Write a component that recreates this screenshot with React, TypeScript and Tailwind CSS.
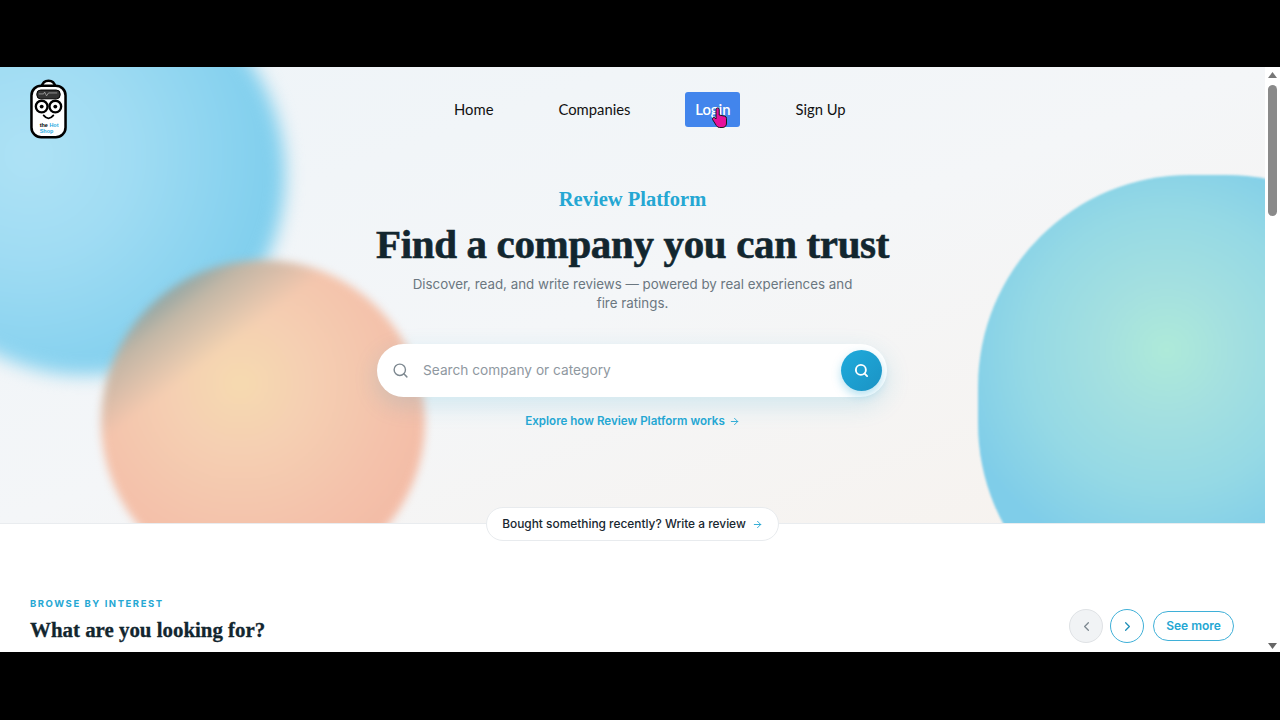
import React from 'react'
import { ArrowRight, ChevronLeft, ChevronRight, Search } from 'lucide-react'

const serif = "font-['Liberation_Serif',serif]"
const sans = "font-['Inter',sans-serif]"

function Logo() {
  return (
    <svg width="37" height="61" viewBox="0 0 38 62" className="shrink-0">
      <path d="M12 8 Q13 1.5 19 1.5 Q25 1.5 26 8" fill="#fff" stroke="#000" strokeWidth="2.5" />
      <rect x="1.5" y="6.5" width="35" height="53" rx="10" fill="#fff" stroke="#000" strokeWidth="2.6" />
      <rect x="7" y="11" width="24" height="9" rx="4" fill="#333" stroke="#000" strokeWidth="1" />
      <path d="M9 15 h5 l1 -2 l2 4 l2 -3 h9" fill="none" stroke="#bbb" strokeWidth="0.7" />
      <circle cx="12" cy="28" r="6" fill="#fff" stroke="#000" strokeWidth="2.4" />
      <circle cx="26" cy="28" r="6" fill="#fff" stroke="#000" strokeWidth="2.4" />
      <circle cx="12" cy="28" r="2" fill="#000" />
      <circle cx="26" cy="28" r="2" fill="#000" />
      <path d="M14 37 Q19 43 24 37" fill="none" stroke="#000" strokeWidth="1.8" strokeLinecap="round" />
      <text x="10" y="49" fontSize="5.6" fontWeight="700" fontFamily="Liberation Sans, sans-serif" fill="#000">the <tspan fill="#29abe2">Hot</tspan></text>
      <text x="10" y="55" fontSize="5.6" fontWeight="700" fontFamily="Liberation Sans, sans-serif" fill="#29abe2">Shop</text>
    </svg>
  )
}

function Cursor() {
  return (
    <svg width="18" height="22" viewBox="0 0 18 22" className="absolute left-[26px] top-[15px]">
      <path
        d="M5 2.5 a1.6 1.6 0 0 1 3.2 0 V8 l5.5 1.2 a2.2 2.2 0 0 1 1.8 2.2 V16 q0 4.5 -4.5 4.5 H8.5 q-2 0 -3.2 -2 L1.6 12.6 a1.5 1.5 0 0 1 2.4 -1.7 L5 12 Z"
        fill="#e6109a"
        stroke="#1a1a1a"
        strokeWidth="1"
      />
    </svg>
  )
}

function Blobs() {
  return (
    <div className="absolute inset-0 overflow-hidden">
      <div className="absolute left-[-115px] top-[-92px] h-[400px] w-[400px] rounded-full bg-[radial-gradient(circle_at_36%_45%,#aee2f5_0%,#a0dcf3_30%,#88d2ef_62%,#78cbeb_85%,#7dcdec_100%)] blur-[9px]" />
      <div className="absolute left-[101px] top-[193px] h-[324px] w-[324px] rounded-full bg-[linear-gradient(143deg,#98a8a4_15%,rgba(160,170,160,0.6)_20%,rgba(243,184,163,0)_32%),radial-gradient(circle_at_43%_38%,#f6dab0_0%,#f5cfb2_25%,#f4c2ab_55%,#f3b8a3_85%,#f3b6a2_100%)] blur-[4px]" />
      <div className="absolute left-[978px] top-[108px] h-[460px] w-[460px] rounded-[46%] bg-[radial-gradient(circle_215px_at_41%_38%,#aeead9_0%,#a4e0e0_30%,#95d9e5_65%,#7fcde9_100%)] blur-[1px]" />
    </div>
  )
}

function NavItem({ label, active }: { label: string; active?: boolean }) {
  return (
    <a className={`relative flex h-[35px] items-center justify-center rounded-[3px] px-[10px] text-[14.8px] ${active ? 'w-[55px] bg-[#4285ec] font-semibold text-white' : 'text-[#111]'}`}>
      {label}
      {active && <Cursor />}
    </a>
  )
}

export default function App() {
  return (
    <div className="flex h-[720px] w-[1280px] flex-col overflow-hidden bg-black">
      <div className="h-[67px] shrink-0" />
      <div className="flex h-[585px] shrink-0 bg-white">
        <main className="relative w-[1265px] shrink-0 overflow-hidden">
          <section className="relative h-[457px] border-b border-[#e9ecef] bg-gradient-to-br from-[#eef4f8] via-[#f4f6f8] to-[#f7f2ed]">
            <Blobs />
            <div className="relative">
              <header className="flex h-[84px] items-start pl-[30px] pt-[12px] font-['Lato',sans-serif]">
                <Logo />
                <nav className="ml-[377px] mt-[13px] flex gap-[45px]">
                  <NavItem label="Home" />
                  <NavItem label="Companies" />
                  <NavItem label="Login" active />
                  <NavItem label="Sign Up" />
                </nav>
              </header>
              <div className={`flex flex-col items-center ${sans}`}>
                <p className={`mt-[34px] text-[20.5px] leading-[28px] font-bold text-[#25a7d3] ${serif}`}>Review Platform</p>
                <h1 className={`mt-[6px] text-[41px] leading-[50px] font-bold tracking-[-0.35px] text-[#12262f] [-webkit-text-stroke:0.6px_#12262f] ${serif}`}>Find a company you can trust</h1>
                <p className="mt-[6px] w-[450px] text-center text-[13.35px] leading-[19px] text-[#6b7780]">
                  Discover, read, and write reviews — powered by real experiences and fire ratings.
                </p>
                <div className="mr-[1px] mt-[31px] flex h-[53px] w-[510px] items-center rounded-full bg-white pl-[15px] pr-[5px] shadow-[0_8px_24px_rgba(37,167,211,0.18)]">
                  <Search size={17} className="text-[#7d8890]" />
                  <span className="ml-[14px] flex-1 text-[13.7px] text-[#8f989f]">Search company or category</span>
                  <button className="flex h-[41px] w-[41px] items-center justify-center rounded-full bg-gradient-to-br from-[#1fabdc] to-[#1b93c4] text-white shadow-[0_4px_10px_rgba(37,167,211,0.35)]">
                    <Search size={15} strokeWidth={3} />
                  </button>
                </div>
                <a className="mt-[16px] flex items-center gap-[4px] text-[11.6px] leading-[16px] font-semibold text-[#25a7d3]">
                  Explore how Review Platform works <ArrowRight size={11} />
                </a>
              </div>
            </div>
          </section>
          <a className={`absolute left-[486px] top-[440px] flex h-[34px] w-[293px] items-center justify-center gap-[6px] rounded-full border border-[#e8ebee] bg-white text-[11.9px] font-medium text-[#182730] ${sans}`}>
            Bought something recently? Write a review <ArrowRight size={11} className="text-[#25a7d3]" />
          </a>
          <section className={`flex items-start justify-between pl-[30px] pr-[31px] pt-[73px] ${sans}`}>
            <div>
              <p className="text-[9.5px] leading-[14px] font-bold tracking-[1.55px] text-[#25a7d3]">BROWSE BY INTEREST</p>
              <h2 className={`mt-[3px] text-[20.9px] leading-[32px] font-bold text-[#12262f] [-webkit-text-stroke:0.3px_#12262f] ${serif}`}>What are you looking for?</h2>
            </div>
            <div className="mt-[12px] flex items-center gap-[7px]">
              <button className="flex h-[34px] w-[34px] items-center justify-center rounded-full border border-[#dfe2e5] bg-[#f1f3f5] text-[#7d8890]">
                <ChevronLeft size={15} />
              </button>
              <button className="flex h-[34px] w-[34px] items-center justify-center rounded-full border border-[#3fb0d8] bg-white text-[#1f8fb8]">
                <ChevronRight size={15} />
              </button>
              <button className="ml-[2px] flex h-[30px] w-[81px] items-center justify-center rounded-full border border-[#3fb0d8] bg-white text-[12px] font-semibold text-[#25a7d3]">
                See more
              </button>
            </div>
          </section>
        </main>
        <aside className="flex w-[15px] shrink-0 flex-col items-center bg-white">
          <svg width="9" height="6" viewBox="0 0 9 6" className="mt-[5px]"><path d="M4.5 0 L9 6 H0 Z" fill="#777" /></svg>
          <div className="mt-[7px] h-[131px] w-[9px] rounded-full bg-[#8a8a8a]" />
          <div className="flex-1" />
          <svg width="9" height="6" viewBox="0 0 9 6" className="mb-[3px]"><path d="M0 0 H9 L4.5 6 Z" fill="#666" /></svg>
        </aside>
      </div>
    </div>
  )
}
